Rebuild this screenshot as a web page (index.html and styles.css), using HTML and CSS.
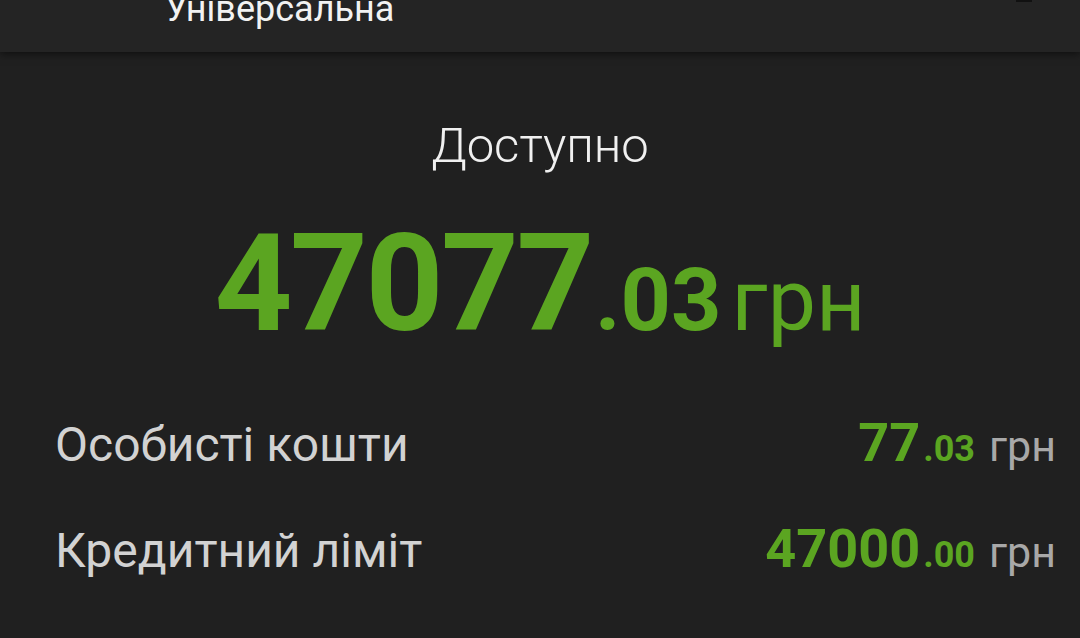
FILE: index.html
```html
<!DOCTYPE html>
<html lang="uk">
<head>
<meta charset="utf-8">
<link rel="stylesheet" href="styles.css">
</head>
<body>
<header class="topbar">
  <div class="title">Універсальна</div>
  <div class="corner"></div>
</header>
<main class="content">
  <div class="label">Доступно</div>
  <div class="total">
    <span class="int">47077</span><span class="frac">.03</span><span class="cur">грн</span>
  </div>
  <div class="rows">
    <div class="row">
      <span class="name">Особисті кошти</span>
      <span class="amount"><span class="aint">77</span><span class="afrac">.03</span><span class="acur">грн</span></span>
    </div>
    <div class="row">
      <span class="name">Кредитний ліміт</span>
      <span class="amount"><span class="aint">47000</span><span class="afrac">.00</span><span class="acur">грн</span></span>
    </div>
  </div>
</main>
</body>
</html>
```
FILE: styles.css
```css
* { box-sizing: border-box; }
html, body {
  margin: 0;
  padding: 0;
  width: 1080px;
  height: 638px;
  overflow: hidden;
  background: #202020;
  font-family: Roboto, "Noto Sans", sans-serif;
}
.topbar {
  position: relative;
  height: 52px;
  background: #242424;
  box-shadow: 0 2px 8px rgba(0,0,0,0.55);
  padding-left: 165px;
  overflow: hidden;
}
.title {
  color: #f2f2f2;
  font-size: 36px;
  line-height: 36px;
  margin-top: -9px;
}
.corner {
  position: absolute;
  top: 0;
  right: 48px;
  width: 16px;
  height: 2px;
  background: #111;
}
.content {
  display: flex;
  flex-direction: column;
  align-items: center;
}
.label {
  margin-top: 66px;
  color: #f0f0f0;
  font-size: 49px;
  font-weight: 300;
  line-height: 56px;
}
.total {
  margin-top: 50px;
  display: flex;
  align-items: baseline;
  color: #5ba521;
  line-height: 120px;
}
.int {
  font-size: 136px;
  font-weight: 700;
  letter-spacing: -2.5px;
}
.frac {
  font-size: 88px;
  font-weight: 700;
  margin-left: 3px;
}
.cur {
  font-size: 86px;
  font-weight: 400;
  margin-left: 10px;
}
.rows {
  align-self: stretch;
  padding: 52px 24px 0 55px;
  display: flex;
  flex-direction: column;
  gap: 40px;
}
.row {
  display: flex;
  justify-content: space-between;
  align-items: baseline;
  line-height: 60px;
}
.name {
  color: #d2d2d2;
  font-size: 48px;
}
.amount {
  display: flex;
  align-items: baseline;
}
.aint {
  color: #5ba521;
  font-size: 54px;
  font-weight: 700;
}
.afrac {
  color: #5ba521;
  font-size: 36px;
  font-weight: 700;
  margin-left: 3px;
}
.acur {
  color: #a8a8a8;
  font-size: 43px;
  margin-left: 14px;
}
```
